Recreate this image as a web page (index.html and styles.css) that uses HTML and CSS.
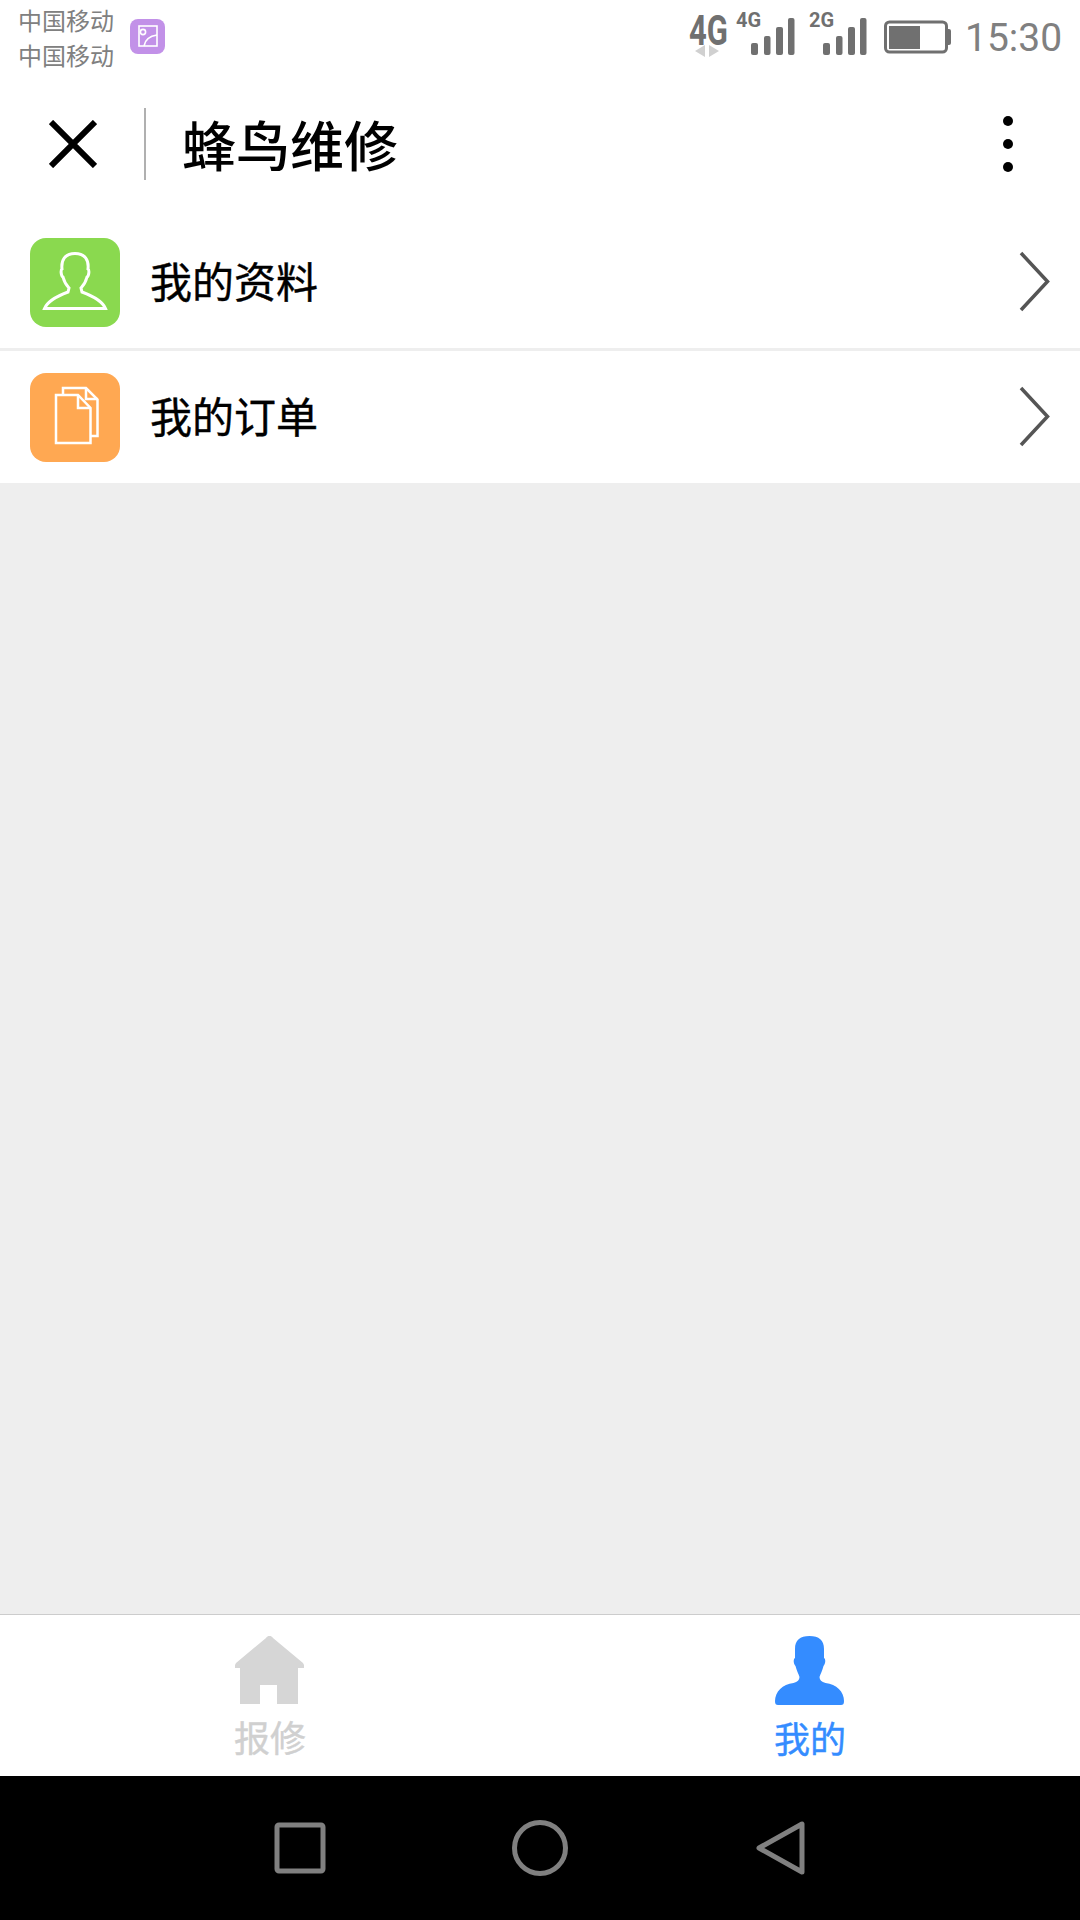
FILE: index.html
```html
<!DOCTYPE html>
<html lang="zh-CN">
<head>
  <meta charset="UTF-8" />
  <meta name="viewport" content="width=device-width, initial-scale=1" />
  <title>蜂鸟维修</title>
  <link rel="stylesheet" href="styles.css">
</head>
<body>
  <div class="status-bar">
    <div class="carriers">
      <div>中国移动</div>
      <div>中国移动</div>
    </div>
    <svg class="app-badge" width="35" height="35" viewBox="0 0 35 35">
      <rect width="35" height="35" rx="8" fill="#c291e8"/>
      <g fill="none" stroke="#fff" stroke-width="1.6">
        <rect x="9" y="7" width="18" height="20"/>
        <circle cx="13" cy="13" r="2.6"/>
        <path d="M14 27c1-6 6-10 13-11"/>
      </g>
    </svg>
    <svg class="signals" width="264" height="72" viewBox="0 0 264 72">
      <text class="net-big" transform="translate(0 45) scale(1 1.4)">4G</text>
      <path d="M16 45v12l-10-6zM20 45v12l10-6z" fill="#d0d0d0"/>
      <text class="net-small" x="47" y="27">4G</text>
      <g fill="#707070">
        <rect x="62" y="43" width="7" height="12" rx="2"/>
        <rect x="75" y="36" width="6.500" height="19" rx="2"/>
        <rect x="87" y="27" width="7" height="28" rx="2"/>
        <rect x="99" y="18" width="6.500" height="37" rx="2"/>
      </g>
      <text class="net-small" x="120" y="27">2G</text>
      <g fill="#707070">
        <rect x="134" y="43" width="7" height="12" rx="2"/>
        <rect x="147" y="36" width="6.500" height="19" rx="2"/>
        <rect x="159" y="27" width="7" height="28" rx="2"/>
        <rect x="171" y="18" width="6.500" height="37" rx="2"/>
      </g>
      <rect x="196.500" y="22" width="61" height="30" rx="4" fill="none" stroke="#707070" stroke-width="3"/>
      <rect x="200" y="26" width="31" height="23" fill="#707070"/>
      <path d="M259 29h1a2 2 0 0 1 2 2v12a2 2 0 0 1-2 2h-1z" fill="#707070"/>
    </svg>
    <div class="clock">15:30</div>
  </div>

  <div class="title-bar">
    <svg class="close-icon" width="48" height="48" viewBox="0 0 48 48">
      <path d="M2 2l44 44M46 2L2 46" stroke="#000" stroke-width="6" fill="none"/>
    </svg>
    <div class="title-divider"></div>
    <h1 class="title">蜂鸟维修</h1>
    <div class="more-dots"><span></span><span></span><span></span></div>
  </div>

  <div class="menu-list">
    <div class="menu-row">
      <svg class="menu-icon" width="90" height="89" viewBox="0 0 90 89">
        <rect width="90" height="89" rx="16" fill="#8ad94f"/>
        <path d="M14.500 70.500C18 62 30 57 38 54l1-4c-3-3-5-7-6-11-2-1-2.500-7-1-8-1-9 3-15.500 13-15.500S59 22 58 31c1.500 1 1 7-1 8-1 4-3 8-6 11l1 4c8 3 20 8 23.500 16.500z" fill="none" stroke="#fff" stroke-width="3"/>
      </svg>
      <span class="menu-label">我的资料</span>
      <svg class="chevron" width="31" height="61" viewBox="0 0 31 61">
        <path d="M2 2l26.500 28.500L2 59" fill="none" stroke="#555" stroke-width="3.500"/>
      </svg>
    </div>
    <div class="menu-row">
      <svg class="menu-icon" width="90" height="89" viewBox="0 0 90 89">
        <rect width="90" height="89" rx="16" fill="#ffa852"/>
        <g fill="none" stroke="#fff" stroke-width="2.500">
          <path d="M33 22v-7h23l11.500 11.500V63h-7"/>
          <path d="M56 15v11h11.500"/>
          <path d="M26 22h22l12.500 13v35H26z"/>
          <path d="M48 22v13h12.500"/>
        </g>
      </svg>
      <span class="menu-label">我的订单</span>
      <svg class="chevron" width="31" height="61" viewBox="0 0 31 61">
        <path d="M2 2l26.500 28.500L2 59" fill="none" stroke="#555" stroke-width="3.500"/>
      </svg>
    </div>
  </div>

  <div class="page-fill"></div>

  <div class="tab-bar">
    <div class="tab">
      <svg width="70" height="68" viewBox="0 0 70 68">
        <path d="M34.500 0c1.500 0 2.500.5 3.500 2l30 25 1 2v3h-6v36H42V49H25v19H5V32H0v-3l1-2L31 2c1-1.500 2-2 3.500-2z" fill="#d6d6d6"/>
      </svg>
      <span class="tab-label">报修</span>
    </div>
    <div class="tab tab-active">
      <svg width="70" height="69" viewBox="0 0 70 69">
        <path d="M34.500 0C44 0 49 4 49 13v9c2 1 1.500 6-.5 8-1 4-3 8-4 11 0 3 2 5 6 6 11 1 18.500 9 18.500 18 0 3-1 4-3 4H3c-2 0-3-1-3-4 0-9 7.500-17 18.500-18 4-1 6-3 6-6-1-3-3-7-4-11-2-2-2.500-7-.5-8v-9C20 4 25 0 34.500 0z" fill="#348cff"/>
      </svg>
      <span class="tab-label">我的</span>
    </div>
  </div>

  <div class="nav-bar">
    <svg width="56" height="56" viewBox="0 0 56 56">
      <rect x="5" y="5" width="46" height="46" rx="2" fill="none" stroke="#808080" stroke-width="5"/>
    </svg>
    <svg width="56" height="56" viewBox="0 0 56 56">
      <circle cx="28" cy="28" r="25.500" fill="none" stroke="#808080" stroke-width="5"/>
    </svg>
    <svg width="56" height="56" viewBox="0 0 56 56">
      <path d="M7 28L50 4v48z" fill="none" stroke="#808080" stroke-width="5" stroke-linejoin="round"/>
    </svg>
  </div>
</body>
</html>
```

FILE: styles.css
```css
body {
  margin: 0;
  width: 1080px;
  height: 1920px;
  display: flex;
  flex-direction: column;
  background-color: #fff;
  font-family: "Noto Sans CJK SC", "Noto Sans", sans-serif;
  color: #000;
}

/* status bar */
.status-bar {
  height: 72px;
  display: flex;
  align-items: flex-start;
  padding-left: 18px;
}
.carriers {
  width: 112px;
  padding-top: 2px;
  font-size: 24px;
  line-height: 35px;
  color: #808080;
}
.app-badge {
  margin-top: 19px;
}
.signals {
  margin-left: 524px;
  flex-shrink: 0;
}
.net-big {
  font-family: Roboto, sans-serif;
  font-weight: 700;
  font-size: 31px;
  fill: #707070;
}
.net-small {
  font-family: Roboto, sans-serif;
  font-weight: 700;
  font-size: 20px;
  fill: #707070;
}
.clock {
  margin-left: 12px;
  font-family: Roboto, sans-serif;
  font-size: 39px;
  line-height: 76px;
  color: #808080;
}

/* title bar */
.title-bar {
  height: 144px;
  display: flex;
  align-items: center;
}
.close-icon {
  margin-left: 49px;
}
.title-divider {
  width: 2px;
  height: 72px;
  margin-left: 47px;
  background-color: #b0b0b0;
}
.title {
  flex: 1;
  margin: 0 0 0 36px;
  font-size: 54px;
  font-weight: 500;
  line-height: 72px;
}
.more-dots {
  width: 10px;
  margin-right: 67px;
  display: flex;
  flex-direction: column;
  gap: 13px;
}
.more-dots span {
  width: 10px;
  height: 10px;
  border-radius: 50%;
  background-color: #000;
}

/* menu */
.menu-row {
  height: 132px;
  display: flex;
  align-items: center;
  padding: 0 30px;
  background-color: #fff;
}
.menu-row + .menu-row {
  border-top: 3px solid #eee;
}
.menu-icon {
  margin-top: 1px;
}
.menu-label {
  flex: 1;
  margin: 0 0 5px 30px;
  font-size: 42px;
  line-height: 60px;
  -webkit-text-stroke: 0.4px #000;
}
.chevron {
  margin-bottom: 2px;
}

.page-fill {
  flex: 1;
  background-color: #eee;
}

/* bottom tabs */
.tab-bar {
  height: 161px;
  display: flex;
  border-top: 1px solid #ccc;
  background-color: #fff;
}
.tab {
  flex: 1;
  display: flex;
  flex-direction: column;
  align-items: center;
  padding-top: 21px;
  color: #d0d0d0;
}
.tab-label {
  font-size: 36px;
  line-height: 48px;
  margin-top: 8px;
  -webkit-text-stroke: 0.4px currentColor;
}
.tab-active {
  color: #348cff;
}

/* android nav */
.nav-bar {
  height: 144px;
  display: flex;
  justify-content: center;
  align-items: center;
  gap: 184px;
  background-color: #000;
}
```
